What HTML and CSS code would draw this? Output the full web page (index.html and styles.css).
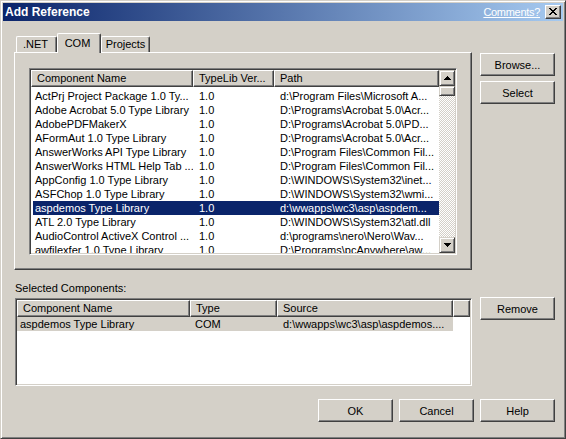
FILE: index.html
```html
<!DOCTYPE html>
<html>
<head>
    <link rel="stylesheet" href="styles.css">
</head>
<body>
    <div class="window">

        <div class="titlebar">
            <span class="title">Add Reference</span>
            <a class="comments">Comments?</a>
            <span class="close-btn">
                <svg width="8" height="7" viewBox="0 0 8 7"><path d="M0 0h2v1H0zM6 0h2v1H6zM1 1h2v1H1zM5 1h2v1H5zM2 2h4v1H2zM3 3h2v1H3zM2 4h4v1H2zM1 5h2v1H1zM5 5h2v1H5zM0 6h2v1H0zM6 6h2v1H6z" fill="#000"/></svg>
            </span>
        </div>

        <div class="section top-section">
            <div class="left">
                <div class="tabs">
                    <div class="tab tab-net">.NET</div>
                    <div class="tab tab-com active">COM</div>
                    <div class="tab tab-proj">Projects</div>
                </div>
                <div class="tab-page">
                    <div class="listview big-list">
                        <div class="lv-main">
                            <div class="lv-header">
                                <div class="hd w-name">Component Name</div>
                                <div class="hd w-ver">TypeLib Ver...</div>
                                <div class="hd fill">Path</div>
                            </div>
                            <div class="lv-rows">
                                <div class="row"><span class="c1">ActPrj Project Package 1.0 Ty...</span><span class="c2">1.0</span><span class="c3">d:\Program Files\Microsoft A...</span></div>
                                <div class="row"><span class="c1">Adobe Acrobat 5.0 Type Library</span><span class="c2">1.0</span><span class="c3">D:\Programs\Acrobat 5.0\Acr...</span></div>
                                <div class="row"><span class="c1">AdobePDFMakerX</span><span class="c2">1.0</span><span class="c3">D:\Programs\Acrobat 5.0\PD...</span></div>
                                <div class="row"><span class="c1">AFormAut 1.0 Type Library</span><span class="c2">1.0</span><span class="c3">D:\Programs\Acrobat 5.0\Acr...</span></div>
                                <div class="row"><span class="c1">AnswerWorks API Type Library</span><span class="c2">1.0</span><span class="c3">D:\Program Files\Common Fil...</span></div>
                                <div class="row"><span class="c1">AnswerWorks HTML Help Tab ...</span><span class="c2">1.0</span><span class="c3">D:\Program Files\Common Fil...</span></div>
                                <div class="row"><span class="c1">AppConfig 1.0 Type Library</span><span class="c2">1.0</span><span class="c3">D:\WINDOWS\System32\inet...</span></div>
                                <div class="row"><span class="c1">ASFChop 1.0 Type Library</span><span class="c2">1.0</span><span class="c3">D:\WINDOWS\System32\wmi...</span></div>
                                <div class="row selected"><span class="c1">aspdemos Type Library</span><span class="c2">1.0</span><span class="c3">d:\wwapps\wc3\asp\aspdem...</span></div>
                                <div class="row"><span class="c1">ATL 2.0 Type Library</span><span class="c2">1.0</span><span class="c3">D:\WINDOWS\System32\atl.dll</span></div>
                                <div class="row"><span class="c1">AudioControl ActiveX Control ...</span><span class="c2">1.0</span><span class="c3">d:\programs\nero\Nero\Wav...</span></div>
                                <div class="row"><span class="c1">awfilexfer 1.0 Type Library</span><span class="c2">1.0</span><span class="c3">D:\Programs\pcAnywhere\aw...</span></div>
                            </div>
                        </div>
                        <div class="vscroll">
                            <div class="sb-btn">
                                <svg width="7" height="4" viewBox="0 0 7 4"><path d="M3 0h1v1H3zM2 1h3v1H2zM1 2h5v1H1zM0 3h7v1H0z" fill="#000"/></svg>
                            </div>
                            <div class="sb-track">
                                <div class="sb-thumb"></div>
                            </div>
                            <div class="sb-btn">
                                <svg width="7" height="4" viewBox="0 0 7 4"><path d="M0 0h7v1H0zM1 1h5v1H1zM2 2h3v1H2zM3 3h1v1H3z" fill="#000"/></svg>
                            </div>
                        </div>
                    </div>
                </div>
            </div>
            <div class="side-buttons first">
                <button class="btn">Browse...</button>
                <button class="btn">Select</button>
            </div>
        </div>

        <div class="section mid-section">
            <div class="left">
                <div class="label">Selected Components:</div>
                <div class="listview small-list">
                    <div class="lv-main">
                        <div class="lv-header">
                            <div class="hd w-sname">Component Name</div>
                            <div class="hd w-type">Type</div>
                            <div class="hd w-src">Source</div>
                            <div class="hd fill"></div>
                        </div>
                        <div class="lv-rows">
                            <div class="row picked"><span class="s1">aspdemos Type Library</span><span class="s2">COM</span><span class="s3">d:\wwapps\wc3\asp\aspdemos....</span></div>
                        </div>
                    </div>
                </div>
            </div>
            <div class="side-buttons second">
                <button class="btn">Remove</button>
            </div>
        </div>

        <div class="bottom-buttons">
            <button class="btn">OK</button>
            <button class="btn">Cancel</button>
            <button class="btn">Help</button>
        </div>
    </div>
</body>
</html>
```

FILE: styles.css
```css
* {
    margin: 0;
    padding: 0;
    box-sizing: border-box;
}

body {
    font-family: "Liberation Sans", Arial, sans-serif;
    font-size: 11px;
    color: #000;
    background-color: #d4d0c8;
}

.window {
    width: 566px;
    height: 439px;
    background-color: #d4d0c8;
    border: 1px solid;
    border-color: #d4d0c8 #404040 #404040 #d4d0c8;
    box-shadow: inset 1px 1px #fff, inset -1px -1px #808080;
    padding: 2px;
}

/* title bar */
.titlebar {
    height: 18px;
    display: flex;
    align-items: center;
    padding-left: 2px;
    background: linear-gradient(to right, #0a246a, #a6caf0);
}

.title {
    color: #fff;
    font-weight: bold;
    font-size: 12px;
}

.comments {
    margin-left: auto;
    margin-right: 5px;
    color: #fff;
    text-decoration: underline;
    letter-spacing: -0.3px;
}

.close-btn {
    width: 16px;
    height: 14px;
    margin-right: 2px;
    background-color: #d4d0c8;
    border: 1px solid;
    border-color: #fff #404040 #404040 #fff;
    box-shadow: inset -1px -1px #808080;
    padding: 2px 0 0 3px;
}

.close-btn svg {
    display: block;
}

/* sections */
.section {
    display: flex;
    gap: 8px;
    padding: 0 8px 0 11px;
}

.left {
    width: 458px;
}

.top-section {
    margin-top: 12px;
}

.side-buttons {
    display: flex;
    flex-direction: column;
    gap: 5px;
}

.side-buttons.first {
    padding-top: 20px;
}

.side-buttons.second {
    padding-top: 16px;
}

.btn {
    width: 75px;
    height: 23px;
    font-family: "Liberation Sans", Arial, sans-serif;
    font-size: 11px;
    color: #000;
    background-color: #d4d0c8;
    border: 1px solid;
    border-color: #fff #404040 #404040 #fff;
    box-shadow: inset -1px -1px #808080;
}

/* tabs */
.tabs {
    height: 19px;
    display: flex;
    align-items: flex-end;
    padding-left: 2px;
}

.tab {
    height: 16px;
    line-height: 14px;
    text-align: center;
    border: 1px solid;
    border-bottom: none;
    border-color: #fff #404040 #fff #fff;
    box-shadow: inset -1px 0 #808080;
    border-radius: 2px 2px 0 0;
    background-color: #d4d0c8;
}

.tab-net { width: 41px; padding-right: 2px; }
.tab-com { width: 44px; padding-right: 3px; }
.tab-proj { width: 49px; }

.tab.active {
    height: 20px;
    padding-top: 2px;
    margin-bottom: -1px;
    position: relative;
    z-index: 1;
}

.tab-page {
    height: 218px;
    border: 1px solid;
    border-color: #fff #404040 #404040 #fff;
    box-shadow: inset -1px -1px #808080;
    padding: 15px 14px 14px 14px;
}

/* list views */
.listview {
    display: flex;
    background-color: #fff;
    border: 1px solid;
    border-color: #808080 #fff #fff #808080;
    box-shadow: inset 1px 1px #404040, inset -1px -1px #d4d0c8;
    padding: 1px;
    overflow: hidden;
}

.big-list {
    height: 187px;
}

.small-list {
    height: 88px;
    margin-left: 1px;
}

.lv-main {
    flex: 1;
    min-width: 0;
    display: flex;
    flex-direction: column;
    overflow: hidden;
}

.lv-header {
    height: 17px;
    display: flex;
    flex-shrink: 0;
}

.hd {
    height: 17px;
    line-height: 15px;
    padding-left: 5px;
    white-space: nowrap;
    overflow: hidden;
    background-color: #d4d0c8;
    border: 1px solid;
    border-color: #fff #404040 #404040 #fff;
    box-shadow: inset -1px -1px #808080;
}

.hd.fill { flex: 1; }
.w-name { width: 162px; }
.w-ver { width: 81px; }
.w-sname { width: 173px; }
.w-type { width: 87px; }
.w-src { width: 176px; }

.lv-rows {
    flex: 1;
    overflow: hidden;
}

.big-list .lv-rows {
    padding-top: 2px;
}

.row {
    height: 14px;
    line-height: 14px;
    display: flex;
    white-space: nowrap;
}

.row span {
    overflow: hidden;
}

.big-list .row {
    margin-left: 2px;
}

.c1 { width: 160px; padding-left: 2px; }
.c2 { width: 81px; padding-left: 6px; }
.c3 { flex: 1; padding-left: 6px; }

.row.selected {
    background-color: #0a246a;
    color: #fff;
}

.row.picked {
    width: 436px;
    background-color: #d4d0c8;
}

.s1 { width: 173px; padding-left: 3px; }
.s2 { width: 87px; padding-left: 5px; }
.s3 { width: 176px; padding-left: 6px; }

/* scrollbar */
.vscroll {
    width: 16px;
    display: flex;
    flex-direction: column;
}

.sb-btn {
    height: 16px;
    flex-shrink: 0;
    display: flex;
    justify-content: center;
    align-items: center;
    background-color: #d4d0c8;
    border: 1px solid;
    border-color: #d4d0c8 #404040 #404040 #d4d0c8;
    box-shadow: inset 1px 1px #fff, inset -1px -1px #808080;
}

.sb-btn svg {
    display: block;
}

.sb-track {
    flex: 1;
    background: repeating-conic-gradient(#fff 0 25%, #d4d0c8 0 50%) 0 0 / 2px 2px;
}

.sb-thumb {
    height: 10px;
    background-color: #d4d0c8;
    border: 1px solid;
    border-color: #d4d0c8 #404040 #404040 #d4d0c8;
    box-shadow: inset 1px 1px #fff, inset -1px -1px #808080;
}

/* lower part */
.mid-section {
    margin-top: 11px;
}

.label {
    height: 14px;
    line-height: 14px;
    padding-left: 1px;
    margin-bottom: 3px;
}

.bottom-buttons {
    display: flex;
    justify-content: flex-end;
    gap: 6px;
    padding-right: 8px;
    margin-top: 13px;
}
```
